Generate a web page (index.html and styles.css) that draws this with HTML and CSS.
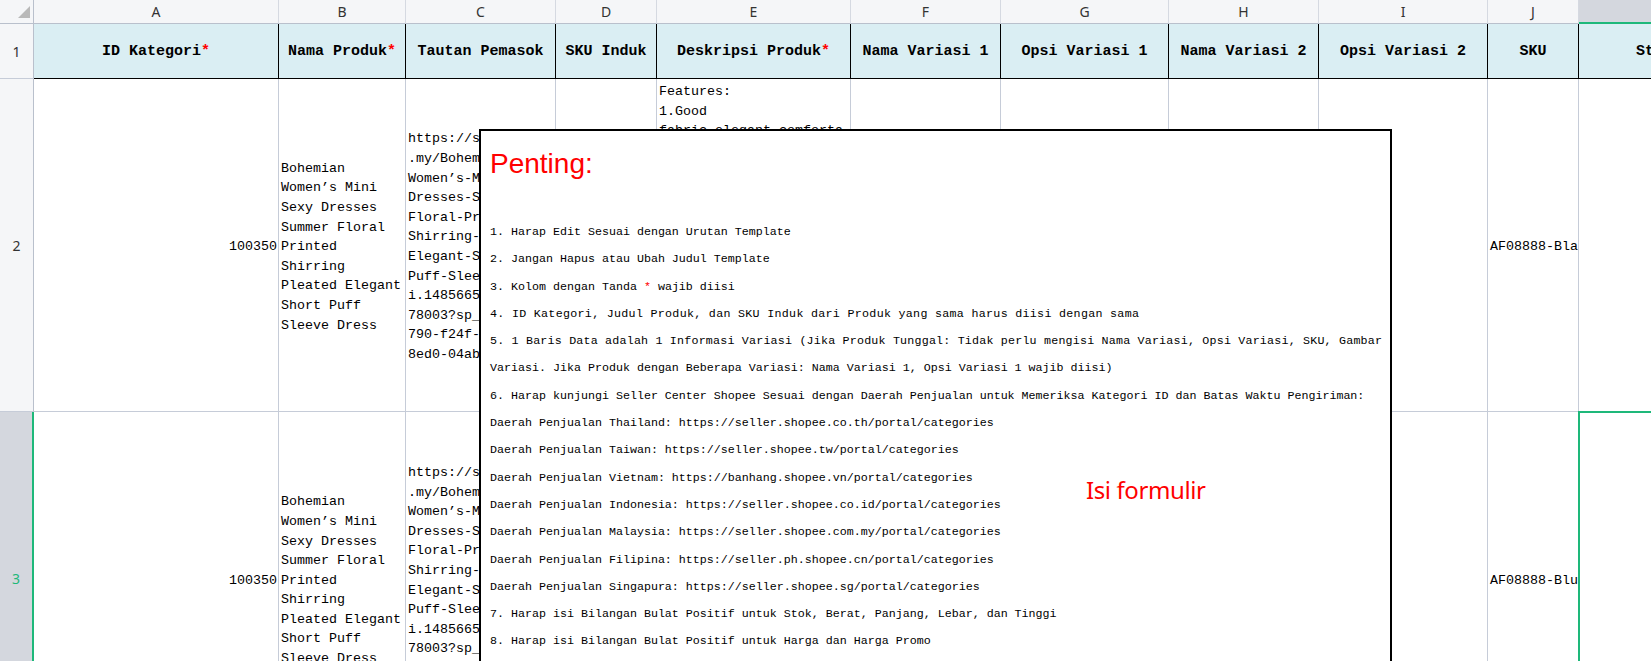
FILE: index.html
```html
<!DOCTYPE html>
<html lang="id">
<head>
<meta charset="utf-8">
<title>Template Produk</title>
<link rel="stylesheet" href="styles.css">
</head>
<body>
<div class="sheet">
  <div class="corner"><svg class="tri" width="12" height="12" viewBox="0 0 12 12"><polygon points="12,0 12,12 0,12" fill="#b9b9b9"/></svg></div>
  <div class="colhead">A</div>
  <div class="colhead">B</div>
  <div class="colhead">C</div>
  <div class="colhead">D</div>
  <div class="colhead">E</div>
  <div class="colhead">F</div>
  <div class="colhead">G</div>
  <div class="colhead">H</div>
  <div class="colhead">I</div>
  <div class="colhead">J</div>
  <div class="colhead sel">K</div>

  <div class="rowhead">1</div>
  <div class="hcell">ID Kategori<span class="req">*</span></div>
  <div class="hcell">Nama Produk<span class="req">*</span></div>
  <div class="hcell">Tautan Pemasok</div>
  <div class="hcell">SKU Induk</div>
  <div class="hcell">Deskripsi Produk<span class="req">*</span></div>
  <div class="hcell">Nama Variasi 1</div>
  <div class="hcell">Opsi Variasi 1</div>
  <div class="hcell">Nama Variasi 2</div>
  <div class="hcell">Opsi Variasi 2</div>
  <div class="hcell">SKU</div>
  <div class="hcell">Stok<span class="req">*</span></div>

  <div class="rowhead">2</div>
  <div class="cell num">100350</div>
  <div class="cell"><div>Bohemian<br>Women’s Mini<br>Sexy Dresses<br>Summer Floral<br>Printed<br>Shirring<br>Pleated Elegant<br>Short Puff<br>Sleeve Dress</div></div>
  <div class="cell"><div>https://shopee.com<br>.my/Bohemian-<br>Women’s-Mini-Sexy-<br>Dresses-Summer-<br>Floral-Printed-<br>Shirring-Pleated-<br>Elegant-Short-<br>Puff-Sleeve-Dress-<br>i.148566578.2374<br>78003?sp_atk=a3b2<br>790-f24f-4a1e-<br>8ed0-04ab5c1d2e3f</div></div>
  <div class="cell"></div>
  <div class="cell top"><div>Features:<br>1.Good<br>fabric,elegant,comforta<br>ble and soft.<br>2.Fashion design.</div></div>
  <div class="cell"></div>
  <div class="cell"></div>
  <div class="cell"></div>
  <div class="cell"></div>
  <div class="cell">AF08888-Black-S</div>
  <div class="cell"></div>

  <div class="rowhead sel">3</div>
  <div class="cell num">100350</div>
  <div class="cell"><div>Bohemian<br>Women’s Mini<br>Sexy Dresses<br>Summer Floral<br>Printed<br>Shirring<br>Pleated Elegant<br>Short Puff<br>Sleeve Dress</div></div>
  <div class="cell"><div>https://shopee.com<br>.my/Bohemian-<br>Women’s-Mini-Sexy-<br>Dresses-Summer-<br>Floral-Printed-<br>Shirring-Pleated-<br>Elegant-Short-<br>Puff-Sleeve-Dress-<br>i.148566578.2374<br>78003?sp_atk=a3b2<br>790-f24f-4a1e-<br>8ed0-04ab5c1d2e3f</div></div>
  <div class="cell"></div>
  <div class="cell top"><div>Features:<br>1.Good<br>fabric,elegant,comforta<br>ble and soft.<br>2.Fashion design.</div></div>
  <div class="cell"></div>
  <div class="cell"></div>
  <div class="cell"></div>
  <div class="cell"></div>
  <div class="cell">AF08888-Blue-S</div>
  <div class="cell active"></div>
</div>

<div class="note">
  <div class="note-title">Penting:</div>
  <div class="note-list">
    <div>1. Harap Edit Sesuai dengan Urutan Template</div>
    <div>2. Jangan Hapus atau Ubah Judul Template</div>
    <div>3. Kolom dengan Tanda <span class="req">*</span> wajib diisi</div>
    <div class="wide">4. ID Kategori, Judul Produk, dan SKU Induk dari Produk yang sama harus diisi dengan sama</div>
    <div class="wide2">5. 1 Baris Data adalah 1 Informasi Variasi (Jika Produk Tunggal: Tidak perlu mengisi Nama Variasi, Opsi Variasi, SKU, Gambar</div>
    <div>Variasi. Jika Produk dengan Beberapa Variasi: Nama Variasi 1, Opsi Variasi 1 wajib diisi)</div>
    <div>6. Harap kunjungi Seller Center Shopee Sesuai dengan Daerah Penjualan untuk Memeriksa Kategori ID dan Batas Waktu Pengiriman:</div>
    <div>Daerah Penjualan Thailand: https://seller.shopee.co.th/portal/categories</div>
    <div>Daerah Penjualan Taiwan: https://seller.shopee.tw/portal/categories</div>
    <div>Daerah Penjualan Vietnam: https://banhang.shopee.vn/portal/categories</div>
    <div>Daerah Penjualan Indonesia: https://seller.shopee.co.id/portal/categories</div>
    <div>Daerah Penjualan Malaysia: https://seller.shopee.com.my/portal/categories</div>
    <div>Daerah Penjualan Filipina: https://seller.ph.shopee.cn/portal/categories</div>
    <div>Daerah Penjualan Singapura: https://seller.shopee.sg/portal/categories</div>
    <div>7. Harap isi Bilangan Bulat Positif untuk Stok, Berat, Panjang, Lebar, dan Tinggi</div>
    <div>8. Harap isi Bilangan Bulat Positif untuk Harga dan Harga Promo</div>
  </div>
  <div class="note-extra">Isi formulir</div>
</div>
</body>
</html>
```

FILE: styles.css
```css
html, body {
  margin: 0;
  padding: 0;
  overflow: hidden;
  background: #ffffff;
}
body {
  width: 1651px;
  height: 661px;
  position: relative;
}
.sheet {
  display: grid;
  grid-template-columns: 34px 245px 127px 150px 101px 194px 150px 168px 150px 169px 91px 160px;
  grid-template-rows: 24px 55px 333px 334px;
  width: 1739px;
  font-family: "Liberation Mono", "DejaVu Sans Mono", monospace;
  font-size: 13.33px;
  color: #000;
}
.sheet > div {
  box-sizing: border-box;
  border-right: 1px solid #c6ccd8;
  border-bottom: 1px solid #c6ccd8;
  overflow: hidden;
  min-width: 0;
}
.corner {
  background: #f5f6f8;
  display: flex;
  justify-content: flex-end;
  align-items: flex-end;
  padding: 0 3px 5px 0;
}
.sheet > .corner {
  border-right-color: #b9c0cc;
  border-bottom-color: #b9c0cc;
}
.tri { display: block; }
.colhead {
  background: #f5f6f8;
  display: flex;
  align-items: center;
  justify-content: center;
  font-family: "Noto Sans", "Liberation Sans", sans-serif;
  font-size: 14px;
  color: #333;
}
.sheet > .colhead {
  border-right-color: #d5d9e1;
  border-bottom-color: #b9c0cc;
}
.sheet > .colhead.sel {
  background: #d4d7de;
  border-bottom: 2px solid #1eb87a;
}
.rowhead {
  background: #f5f6f8;
  display: flex;
  align-items: center;
  justify-content: center;
  font-family: "Noto Sans", "Liberation Sans", sans-serif;
  font-size: 14px;
  color: #333;
}
.sheet > .rowhead {
  border-right-color: #b9c0cc;
}
.sheet > .rowhead.sel {
  background: #d4d7de;
  color: #1eb87a;
  border-right: 2px solid #1eb87a;
}
.hcell {
  background: #daeef3;
  display: flex;
  align-items: center;
  justify-content: center;
  font-weight: bold;
  font-size: 15px;
  white-space: nowrap;
}
.sheet > .hcell {
  border-right-color: #000;
  border-bottom-color: #000;
}
.req { color: #f00; }
.cell {
  display: flex;
  align-items: center;
  padding: 4px 1px 0 2px;
  line-height: 19.6px;
  white-space: nowrap;
}
.cell.num { justify-content: flex-end; }
.cell.top {
  align-items: flex-start;
  padding-top: 3px;
}
.sheet > .cell.active {
  position: relative;
  overflow: visible;
}
.cell.active::before {
  content: "";
  position: absolute;
  left: -1px;
  top: -1px;
  right: -20px;
  bottom: -20px;
  border: 2px solid #1eb87a;
}
.note {
  position: absolute;
  left: 479px;
  top: 129px;
  width: 913px;
  height: 600px;
  box-sizing: border-box;
  border: 2px solid #000;
  background: #fff;
  padding: 16px 10px 0 9px;
  font-family: "Liberation Mono", "DejaVu Sans Mono", monospace;
  color: #000;
  overflow: hidden;
}
.note-title {
  font-family: "Liberation Sans", Arial, sans-serif;
  font-size: 28px;
  line-height: 34px;
  color: #f00;
}
.note-list {
  margin-top: 38px;
  font-size: 11.67px;
  line-height: 27.3px;
  white-space: nowrap;
}
.wide { letter-spacing: 0.3px; }
.wide2 { letter-spacing: 0.2px; }
.note-extra {
  position: absolute;
  left: 605px;
  top: 343px;
  font-family: "Noto Sans", "Liberation Sans", sans-serif;
  font-size: 24px;
  line-height: 32px;
  letter-spacing: -0.4px;
  color: #f00;
}
```
